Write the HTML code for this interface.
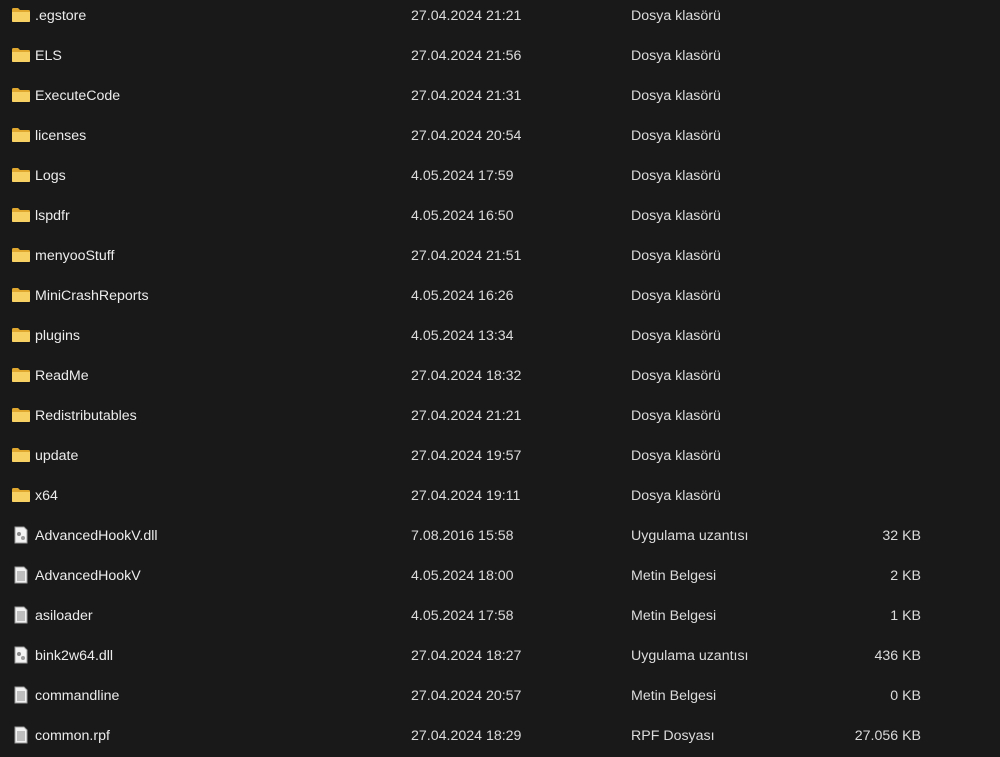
<!DOCTYPE html><html><head><style>
body{margin:0;width:1000px;height:750px;background:#191919;overflow:hidden;font-family:"Liberation Sans",sans-serif;font-size:14.2px;color:#dcdcdc}
.r{position:absolute;left:0;width:1000px;height:40px;line-height:42px}
.r span{position:absolute;white-space:nowrap}
.n{left:35px;color:#ececec}.d{left:411px}.t{left:631px}.s{right:79px}
.ic{position:absolute;left:12px;top:12px}
</style></head><body>
<svg width="0" height="0" style="position:absolute"><defs>
<symbol id="f" viewBox="0 0 18 16"><path d="M0 2.5Q0 1 1.5 1H6l2 2h8.5Q18 3 18 4.5V14Q18 15 17 15H1Q0 15 0 14Z" fill="#e0a82e"/><path d="M0 5h18v9q0 1-1 1H1q-1 0-1-1Z" fill="#f8d164"/></symbol>
<symbol id="t" viewBox="0 0 18 18"><path d="M3 1h9l3 3v13H3Z" fill="#f2f2f2" stroke="#9a9a9a"/><path d="M5 6h8M5 8h8M5 10h8M5 12h8M5 14h8" stroke="#8a8a8a"/></symbol>
<symbol id="g" viewBox="0 0 18 18"><path d="M3 1h9l3 3v13H3Z" fill="#f2f2f2" stroke="#9a9a9a"/><circle cx="7" cy="8" r="2" fill="#888"/><circle cx="11" cy="12" r="2" fill="#999"/></symbol>
</defs></svg>
<div class="r" style="top:-5px"><svg class="ic" width="18" height="16"><use href="#f"/></svg><span class="n">.egstore</span><span class="d">27.04.2024 21:21</span><span class="t">Dosya klasörü</span></div>
<div class="r" style="top:35px"><svg class="ic" width="18" height="16"><use href="#f"/></svg><span class="n">ELS</span><span class="d">27.04.2024 21:56</span><span class="t">Dosya klasörü</span></div>
<div class="r" style="top:75px"><svg class="ic" width="18" height="16"><use href="#f"/></svg><span class="n">ExecuteCode</span><span class="d">27.04.2024 21:31</span><span class="t">Dosya klasörü</span></div>
<div class="r" style="top:115px"><svg class="ic" width="18" height="16"><use href="#f"/></svg><span class="n">licenses</span><span class="d">27.04.2024 20:54</span><span class="t">Dosya klasörü</span></div>
<div class="r" style="top:155px"><svg class="ic" width="18" height="16"><use href="#f"/></svg><span class="n">Logs</span><span class="d">4.05.2024 17:59</span><span class="t">Dosya klasörü</span></div>
<div class="r" style="top:195px"><svg class="ic" width="18" height="16"><use href="#f"/></svg><span class="n">lspdfr</span><span class="d">4.05.2024 16:50</span><span class="t">Dosya klasörü</span></div>
<div class="r" style="top:235px"><svg class="ic" width="18" height="16"><use href="#f"/></svg><span class="n">menyooStuff</span><span class="d">27.04.2024 21:51</span><span class="t">Dosya klasörü</span></div>
<div class="r" style="top:275px"><svg class="ic" width="18" height="16"><use href="#f"/></svg><span class="n">MiniCrashReports</span><span class="d">4.05.2024 16:26</span><span class="t">Dosya klasörü</span></div>
<div class="r" style="top:315px"><svg class="ic" width="18" height="16"><use href="#f"/></svg><span class="n">plugins</span><span class="d">4.05.2024 13:34</span><span class="t">Dosya klasörü</span></div>
<div class="r" style="top:355px"><svg class="ic" width="18" height="16"><use href="#f"/></svg><span class="n">ReadMe</span><span class="d">27.04.2024 18:32</span><span class="t">Dosya klasörü</span></div>
<div class="r" style="top:395px"><svg class="ic" width="18" height="16"><use href="#f"/></svg><span class="n">Redistributables</span><span class="d">27.04.2024 21:21</span><span class="t">Dosya klasörü</span></div>
<div class="r" style="top:435px"><svg class="ic" width="18" height="16"><use href="#f"/></svg><span class="n">update</span><span class="d">27.04.2024 19:57</span><span class="t">Dosya klasörü</span></div>
<div class="r" style="top:475px"><svg class="ic" width="18" height="16"><use href="#f"/></svg><span class="n">x64</span><span class="d">27.04.2024 19:11</span><span class="t">Dosya klasörü</span></div>
<div class="r" style="top:515px"><svg class="ic" width="18" height="18" style="top:11px"><use href="#g"/></svg><span class="n">AdvancedHookV.dll</span><span class="d">7.08.2016 15:58</span><span class="t">Uygulama uzantısı</span><span class="s">32 KB</span></div>
<div class="r" style="top:555px"><svg class="ic" width="18" height="18" style="top:11px"><use href="#t"/></svg><span class="n">AdvancedHookV</span><span class="d">4.05.2024 18:00</span><span class="t">Metin Belgesi</span><span class="s">2 KB</span></div>
<div class="r" style="top:595px"><svg class="ic" width="18" height="18" style="top:11px"><use href="#t"/></svg><span class="n">asiloader</span><span class="d">4.05.2024 17:58</span><span class="t">Metin Belgesi</span><span class="s">1 KB</span></div>
<div class="r" style="top:635px"><svg class="ic" width="18" height="18" style="top:11px"><use href="#g"/></svg><span class="n">bink2w64.dll</span><span class="d">27.04.2024 18:27</span><span class="t">Uygulama uzantısı</span><span class="s">436 KB</span></div>
<div class="r" style="top:675px"><svg class="ic" width="18" height="18" style="top:11px"><use href="#t"/></svg><span class="n">commandline</span><span class="d">27.04.2024 20:57</span><span class="t">Metin Belgesi</span><span class="s">0 KB</span></div>
<div class="r" style="top:715px"><svg class="ic" width="18" height="18" style="top:11px"><use href="#t"/></svg><span class="n">common.rpf</span><span class="d">27.04.2024 18:29</span><span class="t">RPF Dosyası</span><span class="s">27.056 KB</span></div>
</body></html>
